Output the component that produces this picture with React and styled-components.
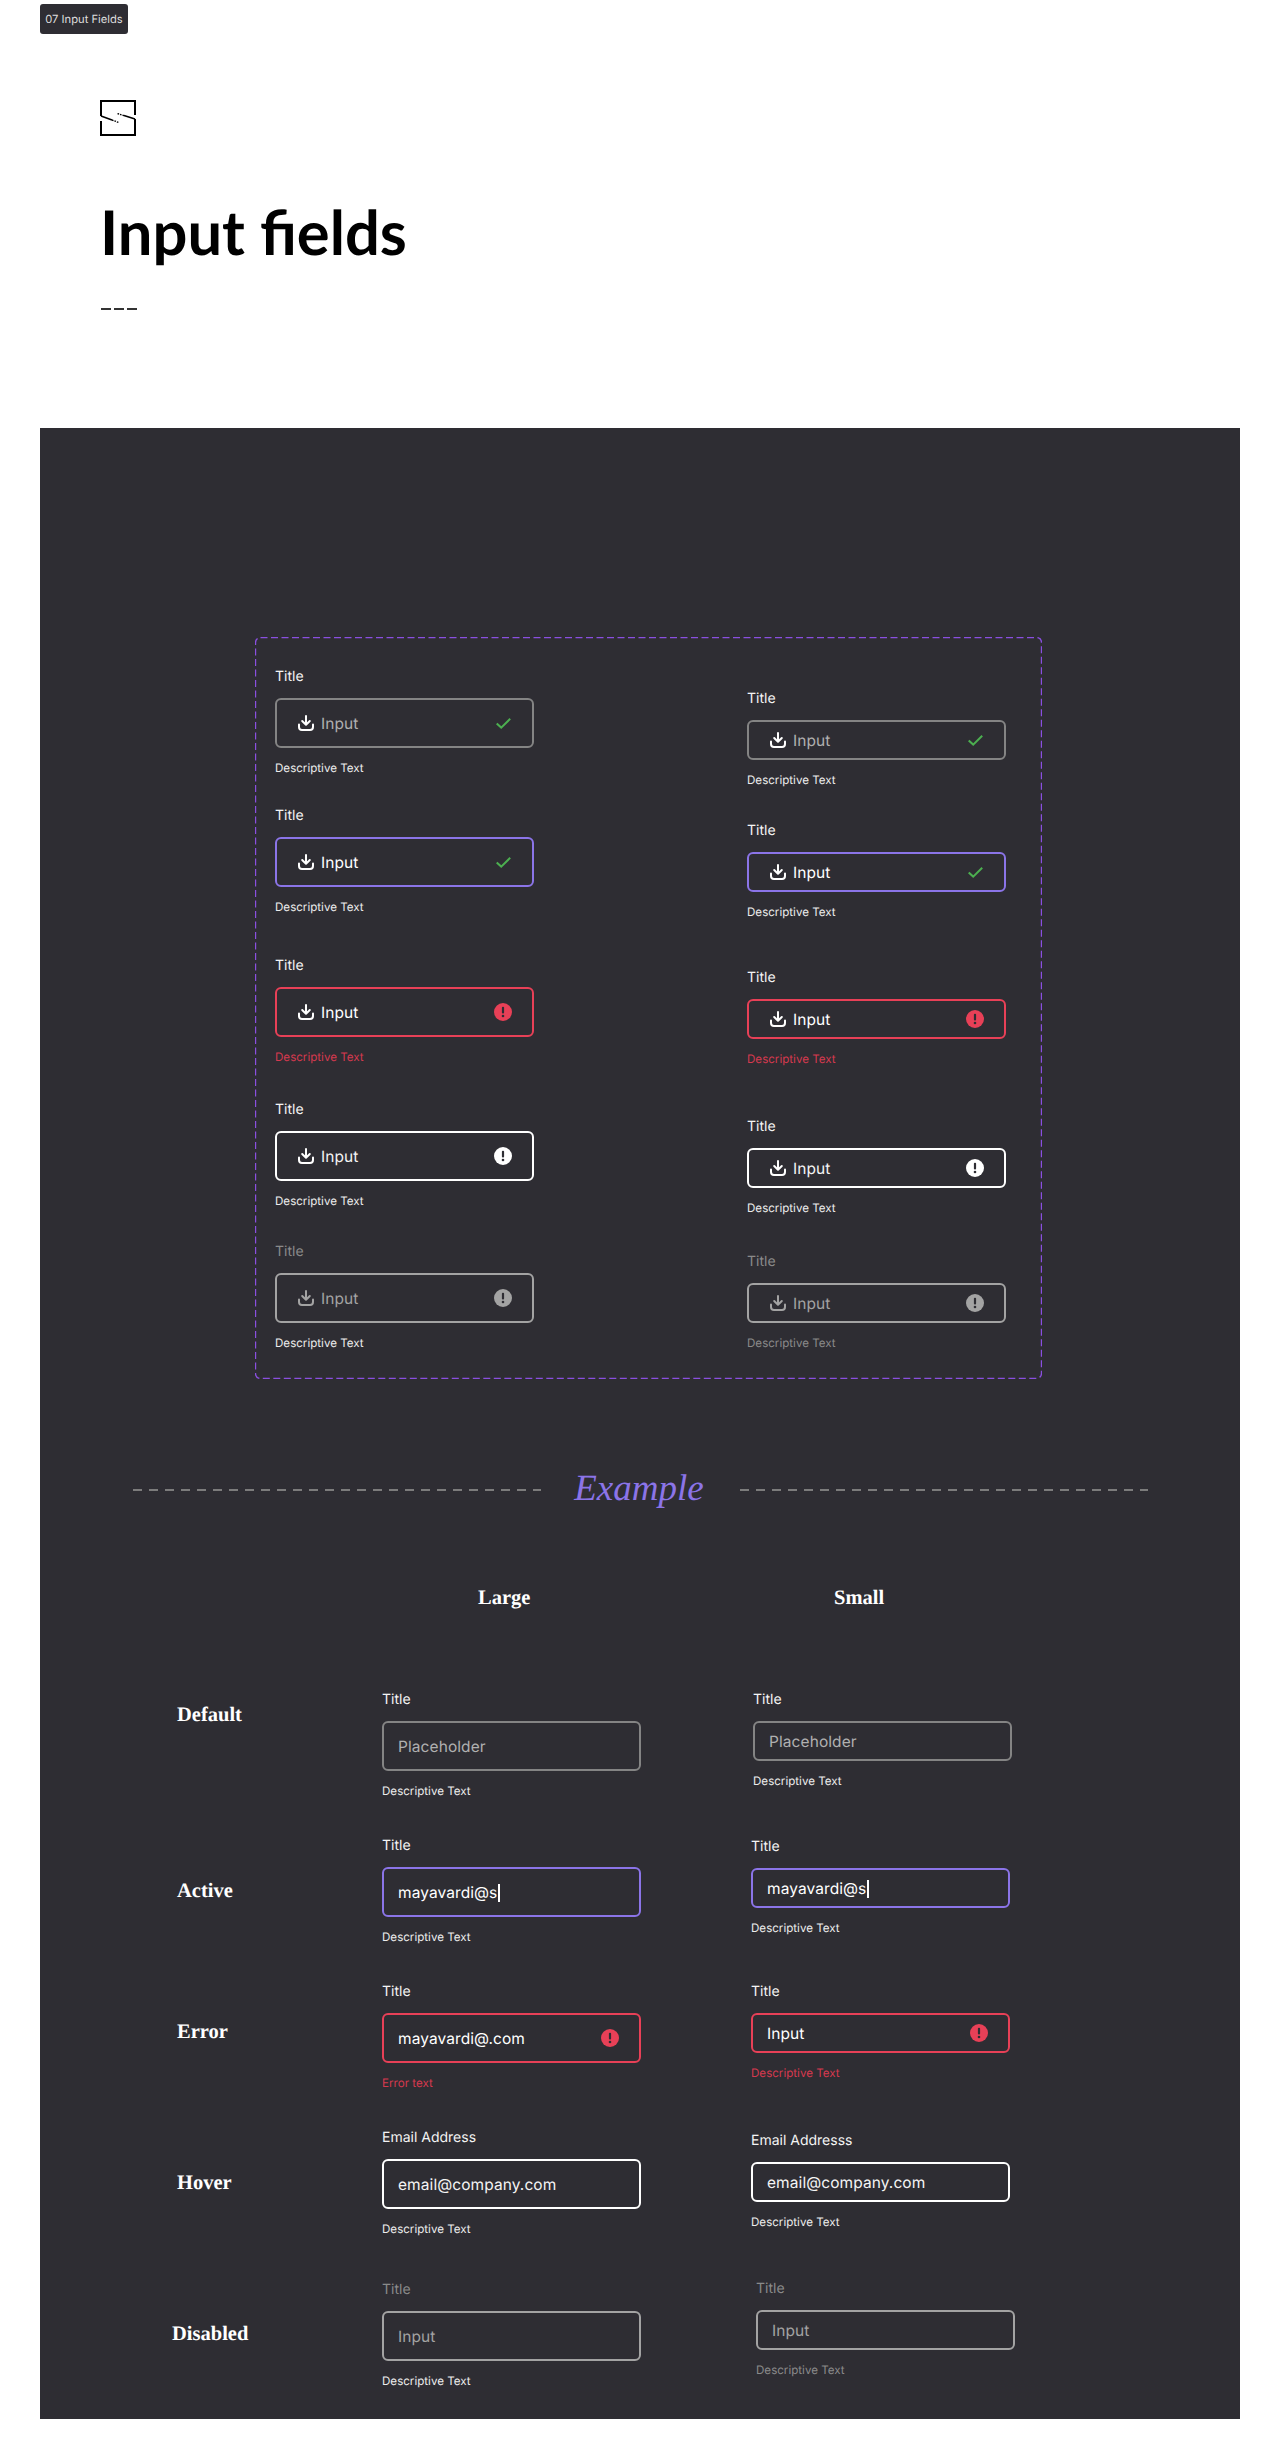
import React from 'react';
import styled, { createGlobalStyle } from 'styled-components';

const tones = {
  idle: { border: '#848484', text: '#b0b0b0', icon: '#ffffff', title: '#f4f4f4' },
  active: { border: '#8b74e8', text: '#ffffff', icon: '#ffffff', title: '#f4f4f4' },
  error: { border: '#e84057', text: '#ffffff', icon: '#ffffff', title: '#f4f4f4' },
  hover: { border: '#ffffff', text: '#f4f4f4', icon: '#ffffff', title: '#f4f4f4' },
  disabled: { border: '#a3a3a3', text: '#a3a3a3', icon: '#a3a3a3', title: '#8a8a8a' },
};

const descColors = { plain: '#ececec', error: '#d6394f', muted: '#8a8a8a' };

const GlobalStyle = createGlobalStyle`
  html, body {
    margin: 0;
    padding: 0;
    background: #ffffff;
  }
  body {
    font-family: Inter, "Liberation Sans", sans-serif;
    text-rendering: geometricPrecision;
  }
`;

const Page = styled.div`
  width: 1280px;
  height: 2460px;
  overflow: hidden;
`;

const Badge = styled.div`
  width: 88px;
  height: 30px;
  margin: 4px 0 0 40px;
  border-radius: 3px;
  background: #2e2d33;
  color: #dedede;
  font-size: 11.2px;
  line-height: 30px;
  text-align: center;
`;

const Header = styled.header`
  display: flex;
  flex-direction: column;
  align-items: flex-start;
  padding: 66px 0 0 100px;
  height: 328px;
  box-sizing: content-box;
`;

const Logo = styled.svg`
  display: block;
  width: 36px;
  height: 36px;
`;

const Heading = styled.h1`
  margin: 58px 0 0;
  color: #000000;
  font-family: Lato, sans-serif;
  font-size: 61.5px;
  font-weight: 700;
  line-height: 76px;
`;

const Dashes = styled.div`
  width: 36px;
  height: 2px;
  margin: 38px 0 0 1px;
  background: repeating-linear-gradient(90deg, #333 0 10px, transparent 10px 13px);
`;

const Panel = styled.main`
  width: 1200px;
  height: 1991px;
  margin-left: 40px;
  padding-top: 209px;
  box-sizing: border-box;
  background: #2e2d33;
`;

const Kit = styled.section`
  position: relative;
  display: flex;
  gap: 213px;
  width: 787px;
  height: 742px;
  margin-left: 215px;
  padding-left: 20px;
  box-sizing: border-box;
`;

const KitFrame = styled.svg`
  position: absolute;
  top: 0;
  left: 0;
  width: 100%;
  height: 100%;
  pointer-events: none;
`;

const KitColumn = styled.div`
  display: flex;
  flex-direction: column;
  width: 259px;
`;

const FieldWrap = styled.div`
  display: flex;
  flex-direction: column;
  width: 259px;
  margin-top: ${p => p.$top || 0}px;
  margin-left: ${p => p.$left || 0}px;
`;

const FieldTitle = styled.div`
  height: 16px;
  margin-bottom: 14px;
  color: ${p => tones[p.$tone].title};
  font-size: 14px;
  line-height: 18px;
`;

const InputBox = styled.div`
  display: flex;
  align-items: center;
  height: ${p => (p.$small ? 40 : 50)}px;
  padding: 0 20px 0 14px;
  box-sizing: border-box;
  border: 2px solid ${p => tones[p.$tone].border};
  border-radius: 6px;
  color: ${p => tones[p.$tone].text};
  font-size: 15.5px;
  letter-spacing: 0.08px;
`;

const LeadIcon = styled.svg`
  flex: none;
  width: 16px;
  height: 16px;
  margin: 0 7px;
  color: ${p => tones[p.$tone].icon};
`;

const InputText = styled.span`
  flex: 1;
  padding-top: 2px;
  line-height: 20px;
`;

const Caret = styled.span`
  display: inline-block;
  width: 1.5px;
  height: 18px;
  margin-left: 1px;
  vertical-align: -4px;
  background: #ffffff;
`;

const TrailSlot = styled.span`
  display: flex;
  flex: none;
  justify-content: center;
  width: 18px;
`;

const Desc = styled.div`
  height: 14px;
  margin-top: 13px;
  color: ${p => descColors[p.$kind]};
  font-size: 11.6px;
  line-height: 14px;
`;

const Divider = styled.div`
  display: flex;
  align-items: center;
  margin: 91px 0 0 93px;
  height: 40px;
`;

const DashLine = styled.span`
  width: 408px;
  height: 2px;
  background: repeating-linear-gradient(90deg, #7c7c7c 0 9px, transparent 9px 16px);
`;

const ExampleWord = styled.h2`
  width: 199px;
  margin: -3px 0 0;
  padding-right: 3px;
  box-sizing: border-box;
  color: #8b74e8;
  font-family: "Liberation Serif", serif;
  font-size: 37px;
  font-style: italic;
  font-weight: 400;
  line-height: 36px;
  text-align: center;
`;

const SizeRow = styled.div`
  display: flex;
  margin: 76px 0 0 438px;
`;

const SizeName = styled.h3`
  width: 356px;
  margin: 0;
  color: #ffffff;
  font-family: "Liberation Serif", serif;
  font-size: 20.5px;
  font-weight: 700;
  line-height: 24px;
`;

const StateRow = styled.div`
  display: grid;
  grid-template-columns: 210px 369px 259px;
  align-items: start;
  height: ${p => p.$height}px;
  padding-left: 132px;
`;

const StateName = styled.h4`
  margin: ${p => p.$top}px 0 0 ${p => p.$left || 0}px;
  color: #ffffff;
  font-family: "Liberation Serif", serif;
  font-size: 20.5px;
  font-weight: 700;
  line-height: 24px;
`;

const StatesBlock = styled.div`
  margin-top: 81px;
`;

const DownloadIcon = ({ tone }) => (
  <LeadIcon $tone={tone} viewBox="0 0 16 16" fill="none" stroke="currentColor" strokeWidth="2" strokeLinecap="round" strokeLinejoin="round">
    <path d="M8 1v8.5M4.2 6 8 9.8 11.8 6" />
    <path d="M1 9.5V12a3 3 0 0 0 3 3h8a3 3 0 0 0 3-3V9.5" />
  </LeadIcon>
);

const CheckIcon = () => (
  <svg width="15" height="11" viewBox="0 0 15 11" fill="none" stroke="#4caf50" strokeWidth="2">
    <path d="M.7 5.4 5.2 9.6 14.2 .8" />
  </svg>
);

const AlertIcon = ({ color }) => (
  <svg width="18" height="18" viewBox="0 0 18 18">
    <circle cx="9" cy="9" r="9" fill={color} />
    <rect x="7.9" y="3.8" width="2.2" height="6.6" rx="1" fill="#2e2d33" />
    <circle cx="9" cy="13" r="1.3" fill="#2e2d33" />
  </svg>
);

const alertColors = { error: '#e84057', disabled: '#a3a3a3', hover: '#ffffff' };

const Field = ({ tone = 'idle', small, title = 'Title', text = 'Input', desc = 'Descriptive Text', descKind = 'plain', lead, trail, caret, top, left }) => (
  <FieldWrap $top={top} $left={left}>
    <FieldTitle $tone={tone}>{title}</FieldTitle>
    <InputBox $tone={tone} $small={small}>
      {lead && <DownloadIcon tone={tone} />}
      <InputText>
        {text}
        {caret && <Caret />}
      </InputText>
      {trail === 'check' && (
        <TrailSlot>
          <CheckIcon />
        </TrailSlot>
      )}
      {trail === 'alert' && (
        <TrailSlot>
          <AlertIcon color={alertColors[tone]} />
        </TrailSlot>
      )}
    </InputBox>
    <Desc $kind={descKind}>{desc}</Desc>
  </FieldWrap>
);

const kitLeft = [
  { tone: 'idle', trail: 'check', top: 31 },
  { tone: 'active', trail: 'check', top: 32 },
  { tone: 'error', trail: 'alert', descKind: 'error', top: 43 },
  { tone: 'hover', trail: 'alert', top: 37 },
  { tone: 'disabled', trail: 'alert', top: 35 },
];

const kitRight = [
  { tone: 'idle', trail: 'check', top: 53 },
  { tone: 'active', trail: 'check', top: 35 },
  { tone: 'error', trail: 'alert', descKind: 'error', top: 50 },
  { tone: 'hover', trail: 'alert', top: 52 },
  { tone: 'disabled', trail: 'alert', descKind: 'muted', top: 38 },
];

const stateRows = [
  {
    name: 'Default', height: 146, nameTop: 12, nameLeft: 5,
    large: { tone: 'idle', text: 'Placeholder' },
    little: { tone: 'idle', text: 'Placeholder', left: 2 },
  },
  {
    name: 'Active', height: 146, nameTop: 42, nameLeft: 5,
    large: { tone: 'active', text: 'mayavardi@s', caret: true },
    little: { tone: 'active', text: 'mayavardi@s', caret: true, top: 1 },
  },
  {
    name: 'Error', height: 146, nameTop: 37, nameLeft: 5,
    large: { tone: 'error', text: 'mayavardi@.com', trail: 'alert', desc: 'Error text', descKind: 'error' },
    little: { tone: 'error', trail: 'alert', descKind: 'error' },
  },
  {
    name: 'Hover', height: 151, nameTop: 42, nameLeft: 5,
    large: { tone: 'hover', title: 'Email Address', text: 'email@company.com' },
    little: { tone: 'hover', title: 'Email Addresss', text: 'email@company.com', top: 3 },
  },
  {
    name: 'Disabled', height: 139, nameTop: 42,
    large: { tone: 'disabled', top: 1 },
    little: { tone: 'disabled', descKind: 'muted', left: 5 },
  },
];

const App = () => (
  <Page>
    <GlobalStyle />
    <Badge>07 Input Fields</Badge>
    <Header>
      <Logo viewBox="0 0 36 36" fill="none" stroke="#000" strokeWidth="2">
        <path d="M1 16V1h34v14" />
        <path d="M1 21v14h34V19" />
        <path d="M1 16 12 20" strokeWidth="1.6" />
        <path d="M12 20l7 2.6" strokeWidth="1.4" strokeDasharray="1.6 1" />
        <path d="M35 19 24 15.6" strokeWidth="1.6" />
        <path d="M24 15.6 17 13.4" strokeWidth="1.4" strokeDasharray="1.6 1" />
      </Logo>
      <Heading>Input fields</Heading>
      <Dashes />
    </Header>
    <Panel>
      <Kit>
        <KitFrame>
          <rect x="0.5" y="0.5" rx="5" style={{ width: 'calc(100% - 1px)', height: 'calc(100% - 1px)' }} fill="none" stroke="#8a4fe0" strokeWidth="1.4" strokeDasharray="7 3.5" />
        </KitFrame>
        <KitColumn>
          {kitLeft.map((f, i) => (
            <Field key={i} lead {...f} />
          ))}
        </KitColumn>
        <KitColumn>
          {kitRight.map((f, i) => (
            <Field key={i} small lead {...f} />
          ))}
        </KitColumn>
      </Kit>
      <Divider>
        <DashLine />
        <ExampleWord>Example</ExampleWord>
        <DashLine />
      </Divider>
      <SizeRow>
        <SizeName>Large</SizeName>
        <SizeName>Small</SizeName>
      </SizeRow>
      <StatesBlock>
        {stateRows.map(row => (
          <StateRow key={row.name} $height={row.height}>
            <StateName $top={row.nameTop} $left={row.nameLeft}>{row.name}</StateName>
            <Field {...row.large} />
            <Field small {...row.little} />
          </StateRow>
        ))}
      </StatesBlock>
    </Panel>
  </Page>
);

export default App;
